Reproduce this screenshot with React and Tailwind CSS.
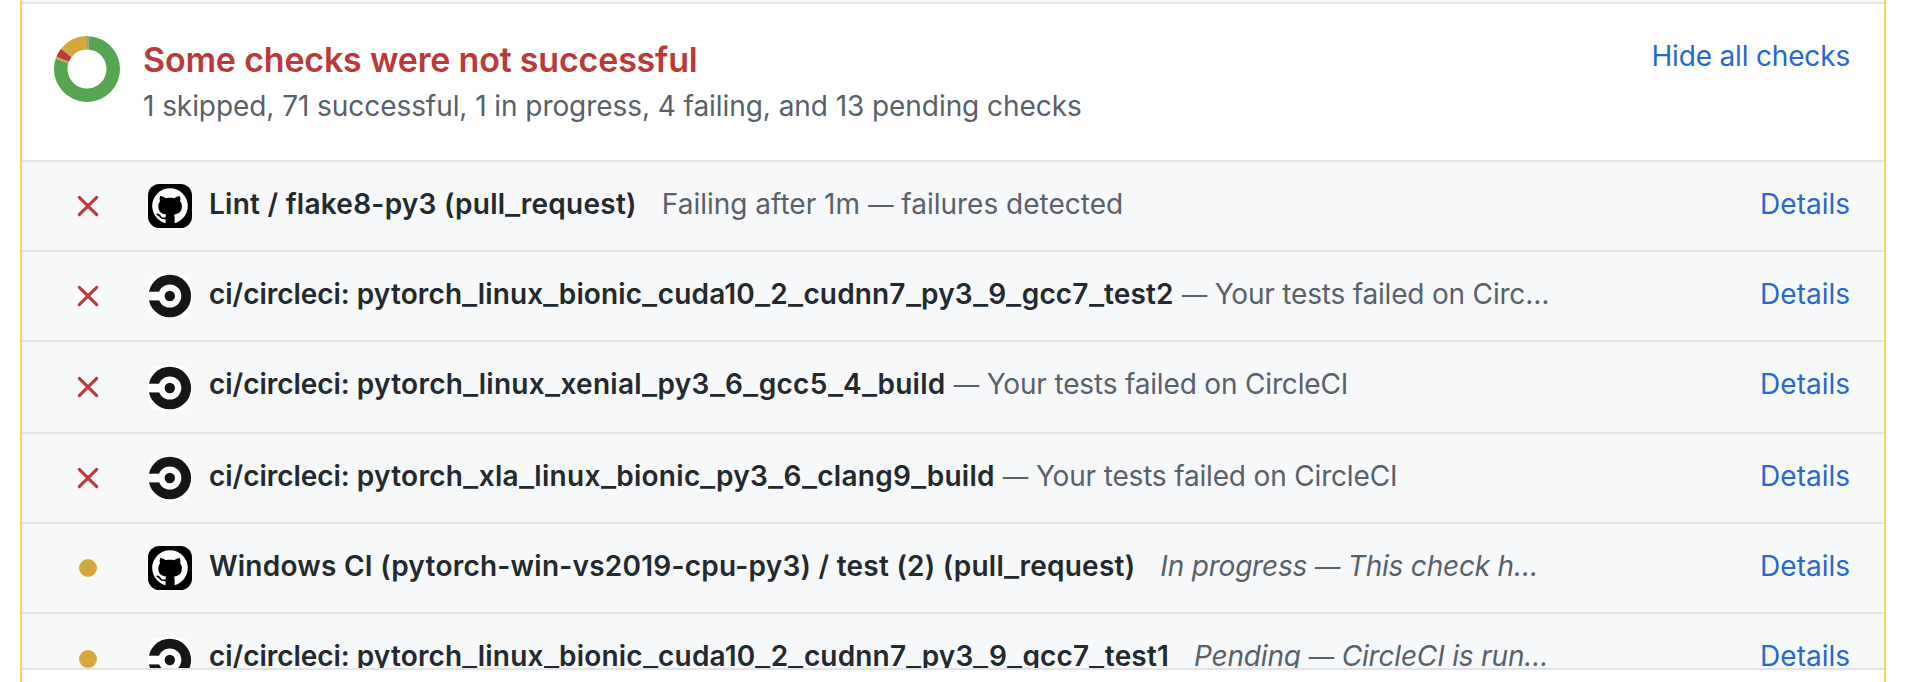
import React from "react";

const CHECKS = [
  {
    status: "failed",
    app: "github",
    name: "Lint / flake8-py3 (pull_request)",
    nameClass: "tracking-[0.26px]",
    note: "Failing after 1m — failures detected",
    noteClass: "ml-[25px] tracking-[0px]",
  },
  {
    status: "failed",
    app: "circle",
    name: "pytorch_linux_bionic_cuda10_2_cudnn7_py3_9_gcc7_test2",
    nameClass: "tracking-[0.15px]",
    note: "— Your tests failed on Circ…",
    noteClass: "ml-[8px] tracking-[-0.19px]",
  },
  {
    status: "failed",
    app: "circle",
    low: true,
    name: "pytorch_linux_xenial_py3_6_gcc5_4_build",
    nameClass: "tracking-[0.29px]",
    note: "— Your tests failed on CircleCI",
    noteClass: "ml-[8px] tracking-[-0.17px]",
  },
  {
    status: "failed",
    app: "circle",
    name: "pytorch_xla_linux_bionic_py3_6_clang9_build",
    nameClass: "tracking-[0.29px]",
    note: "— Your tests failed on CircleCI",
    noteClass: "ml-[8px] tracking-[-0.17px]",
  },
  {
    status: "pending",
    app: "github",
    name: "Windows CI (pytorch-win-vs2019-cpu-py3) / test (2) (pull_request)",
    nameClass: "tracking-[0.24px]",
    note: "In progress — This check h…",
    noteClass: "ml-[25px] italic tracking-[-0.2px]",
  },
  {
    status: "pending",
    app: "circle",
    low: true,
    name: "pytorch_linux_bionic_cuda10_2_cudnn7_py3_9_gcc7_test1",
    nameClass: "tracking-[0.17px]",
    note: "Pending — CircleCI is run…",
    noteClass: "ml-[25px] italic tracking-[-0.17px]",
  },
];

const SEGMENTS = [
  [1, "#959da5"],
  [71, "#55a551"],
  [1, "#d4a93c"],
  [4, "#ba3939"],
  [13, "#d4a93c"],
];

function Donut() {
  const total = 90;
  let start = 0;
  return (
    <svg className="h-[66px] w-[66px] shrink-0" viewBox="0 0 66 66">
      {SEGMENTS.map(([count, color], i) => {
        const a0 = (start / total) * 2 * Math.PI;
        start += count;
        const a1 = (start / total) * 2 * Math.PI;
        const r = 26.2;
        const p = (a) => `${33 + r * Math.sin(a)} ${33 - r * Math.cos(a)}`;
        return (
          <path
            key={i}
            d={`M${p(a0)}A${r} ${r} 0 ${a1 - a0 > Math.PI ? 1 : 0} 1 ${p(a1)}`}
            fill="none"
            stroke={color}
            strokeWidth="13.4"
          />
        );
      })}
    </svg>
  );
}

function StatusIcon({ status }) {
  return (
    <svg className="h-8 w-8" viewBox="0 0 16 16">
      {status === "failed" ? (
        <path
          d="M3.65 3.65l8.7 8.7M12.35 3.65l-8.7 8.7"
          stroke="#ba3939"
          strokeWidth="1.55"
          strokeLinecap="round"
        />
      ) : (
        <circle cx="8" cy="8" r="4.5" fill="#d4a93c" />
      )}
    </svg>
  );
}

function Avatar({ app }) {
  if (app === "github") {
    return (
      <svg className="h-11 w-11" viewBox="0 0 44 44">
        <rect width="44" height="44" rx="11.5" fill="#000" />
        <circle cx="22" cy="22" r="17.8" fill="#fff" />
        <path
          fill="#000"
          d="M12.2 12c2 .1 4.2 1.2 5.7 2.2 2.6-.6 5.6-.6 8.2 0 1.5-1 3.7-2.1 5.7-2.2.8 1.900.8 3.800.3 5.300 1.300 1.500 1.800 3.100 1.800 5 0 5.300-2.900 7.600-7.900 8.300.4.8.6 1.700.6 2.800V41h-9V33.400c0-1 .2-2 .6-2.800-5-.7-7.900-3-7.900-8.300 0-1.900.6-3.500 1.700-5-.5-1.500-.5-3.400.2-5.300z"
        />
        <path
          d="M9.2 30.3c2.2.2 2.5 1.6 3.5 2.9 1 1.2 2.9 1.4 5.6 1"
          fill="none"
          stroke="#000"
          strokeWidth="1.7"
          strokeLinecap="round"
        />
      </svg>
    );
  }
  return (
    <svg className="h-11 w-11" viewBox="0 0 44 44">
      <rect width="44" height="44" rx="11.5" fill="#fff" />
      <circle cx="21.8" cy="22" r="21.3" fill="#161616" />
      <circle cx="21.8" cy="22" r="11.5" fill="#fff" />
      <path fill="#fff" d="M0 17.7h14v8.7H0z" />
      <circle cx="21.8" cy="22" r="5.2" fill="#161616" />
    </svg>
  );
}

function CheckName({ check }) {
  return (
    <span className="font-semibold text-[#24292e]">
      {check.app === "circle" && <span className="tracking-[-0.04px]">ci/circleci: </span>}
      <span className={check.nameClass}>
        {check.name.split("_").map((part, i) => (
          <React.Fragment key={i}>
            {i > 0 && (
              <span className="inline-block origin-left scale-x-[1.15] tracking-[2.3px]">_</span>
            )}
            {part}
          </React.Fragment>
        ))}
      </span>
    </span>
  );
}

function CheckNote({ check }) {
  const [before, after] = check.note.split("—");
  return (
    <span className={`whitespace-pre ${check.noteClass}`}>
      {before}
      <span className="text-[25.5px]">—</span>
      {after}
    </span>
  );
}

function CheckRow({ check, index }) {
  return (
    <div
      className={`flex shrink-0 items-start border-t-2 border-[#e2e4e7] pl-[50px] pr-[34px] ${
        index === 2 ? "h-[92px]" : "h-[90px]"
      }`}
    >
      <div className={check.low ? "pt-[29px]" : "pt-7"}>
        <StatusIcon status={check.status} />
      </div>
      <div className={`ml-11 ${check.low ? "pt-6" : "pt-[22px]"}`}>
        <Avatar app={check.app} />
      </div>
      <div className="ml-[17px] flex flex-1 pt-[21px] whitespace-nowrap text-[#586069]">
        <CheckName check={check} />
        <CheckNote check={check} />
      </div>
      <a className="pt-[21px] text-[#2768d1]">Details</a>
    </div>
  );
}

export default function App() {
  return (
    <div className="h-[682px] overflow-hidden bg-white pl-5 pr-[30px] font-['Inter','Liberation_Sans',sans-serif] text-[28px] leading-[42px]">
      <div className="flex h-full flex-col border-x-2 border-[#f9d262]">
        <div className="h-0.5 shrink-0 bg-[#f7f8fa]" />
        <header className="flex h-[158px] shrink-0 items-start border-t-2 border-[#e2e4e7] pl-8 pr-[34px]">
          <div className="pt-8">
            <Donut />
          </div>
          <div className="ml-[23px] flex-1 pt-8">
            <h3 className="text-[34px] leading-[48px] font-semibold tracking-[-0.19px] text-[#ba3939]">
              Some checks were not successful
            </h3>
            <p className="mt-px leading-[42px] tracking-[-0.065px] text-[#586069]">
              1 skipped, 71 successful, 1 in progress, 4 failing, and 13 pending checks
            </p>
          </div>
          <a className="pt-[31px] tracking-[-0.17px] text-[#2768d1]">Hide all checks</a>
        </header>
        <div className="flex h-[510px] shrink-0 flex-col overflow-hidden border-b-2 border-[#e2e4e7] bg-[#f7f8fa]">
          {CHECKS.map((check, i) => (
            <CheckRow key={check.name} check={check} index={i} />
          ))}
        </div>
      </div>
    </div>
  );
}
